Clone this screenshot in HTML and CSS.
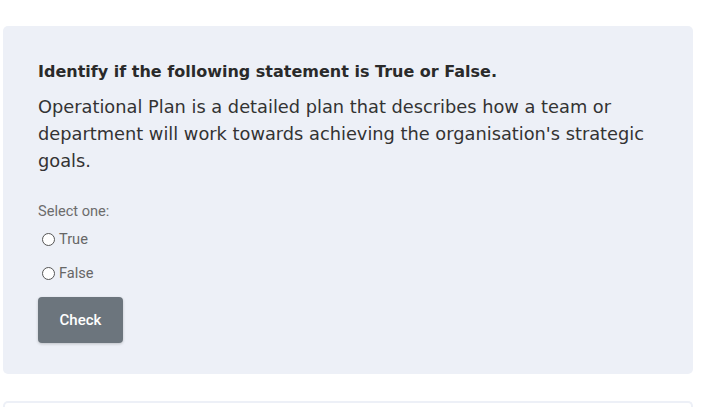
FILE: index.html
```html
<!DOCTYPE html>
<html>
<head>
<meta charset="utf-8">
<link rel="stylesheet" href="styles.css">
</head>
<body>
<div class="page">
  <div class="card">
    <h4 class="q-title">Identify if the following statement is True or False.</h4>
    <p class="q-text">Operational Plan is a detailed plan that describes how a team or department will work towards achieving the organisation's strategic goals.</p>
    <div class="prompt">Select one:</div>
    <div class="options">
      <label class="opt"><span class="radio"></span>True</label>
      <label class="opt"><span class="radio"></span>False</label>
    </div>
    <button class="btn">Check</button>
  </div>
  <div class="card2"></div>
</div>
</body>
</html>
```

FILE: styles.css
```css
html, body { margin: 0; padding: 0; background: #fff; }
.page { padding: 26px 11px 0 3px; }
.card {
  background: #edf0f7;
  border-radius: 5px;
  padding: 33px 35px 31px;
  box-sizing: border-box;
  height: 348px;
}
.q-title {
  margin: 0;
  font-family: "DejaVu Sans", sans-serif;
  font-weight: bold;
  font-size: 16px;
  line-height: 26px;
  color: #2a2a2a;
}
.q-text {
  margin: 8px 0 0;
  font-family: "DejaVu Sans", sans-serif;
  font-size: 17.8px;
  line-height: 27px;
  color: #333;
}
.prompt {
  margin-top: 27px;
  font-family: Roboto, sans-serif;
  font-size: 14.6px;
  color: #6c6c6c;
  line-height: 20px;
}
.options { display: flex; flex-direction: column; gap: 14px; margin-top: 8px; padding-left: 4px; }
.opt {
  display: flex; align-items: center; gap: 4px;
  font-family: Roboto, sans-serif; font-size: 14.6px; color: #666; line-height: 20px;
}
.radio {
  width: 11px; height: 11px; border: 1px solid #555; border-radius: 50%; background: #fff;
}
.btn {
  margin-top: 14px;
  background: #6c757d;
  color: #fff;
  border: none;
  border-radius: 4px;
  width: 85px; height: 46px;
  font-family: Roboto, sans-serif; font-size: 15px; font-weight: 500;
  box-shadow: 0 1px 3px rgba(0,0,0,0.2);
}
.card2 {
  margin-top: 27px;
  height: 20px;
  border: 2px solid #edf0f7;
  border-bottom: none;
  border-radius: 5px 5px 0 0;
}
```
